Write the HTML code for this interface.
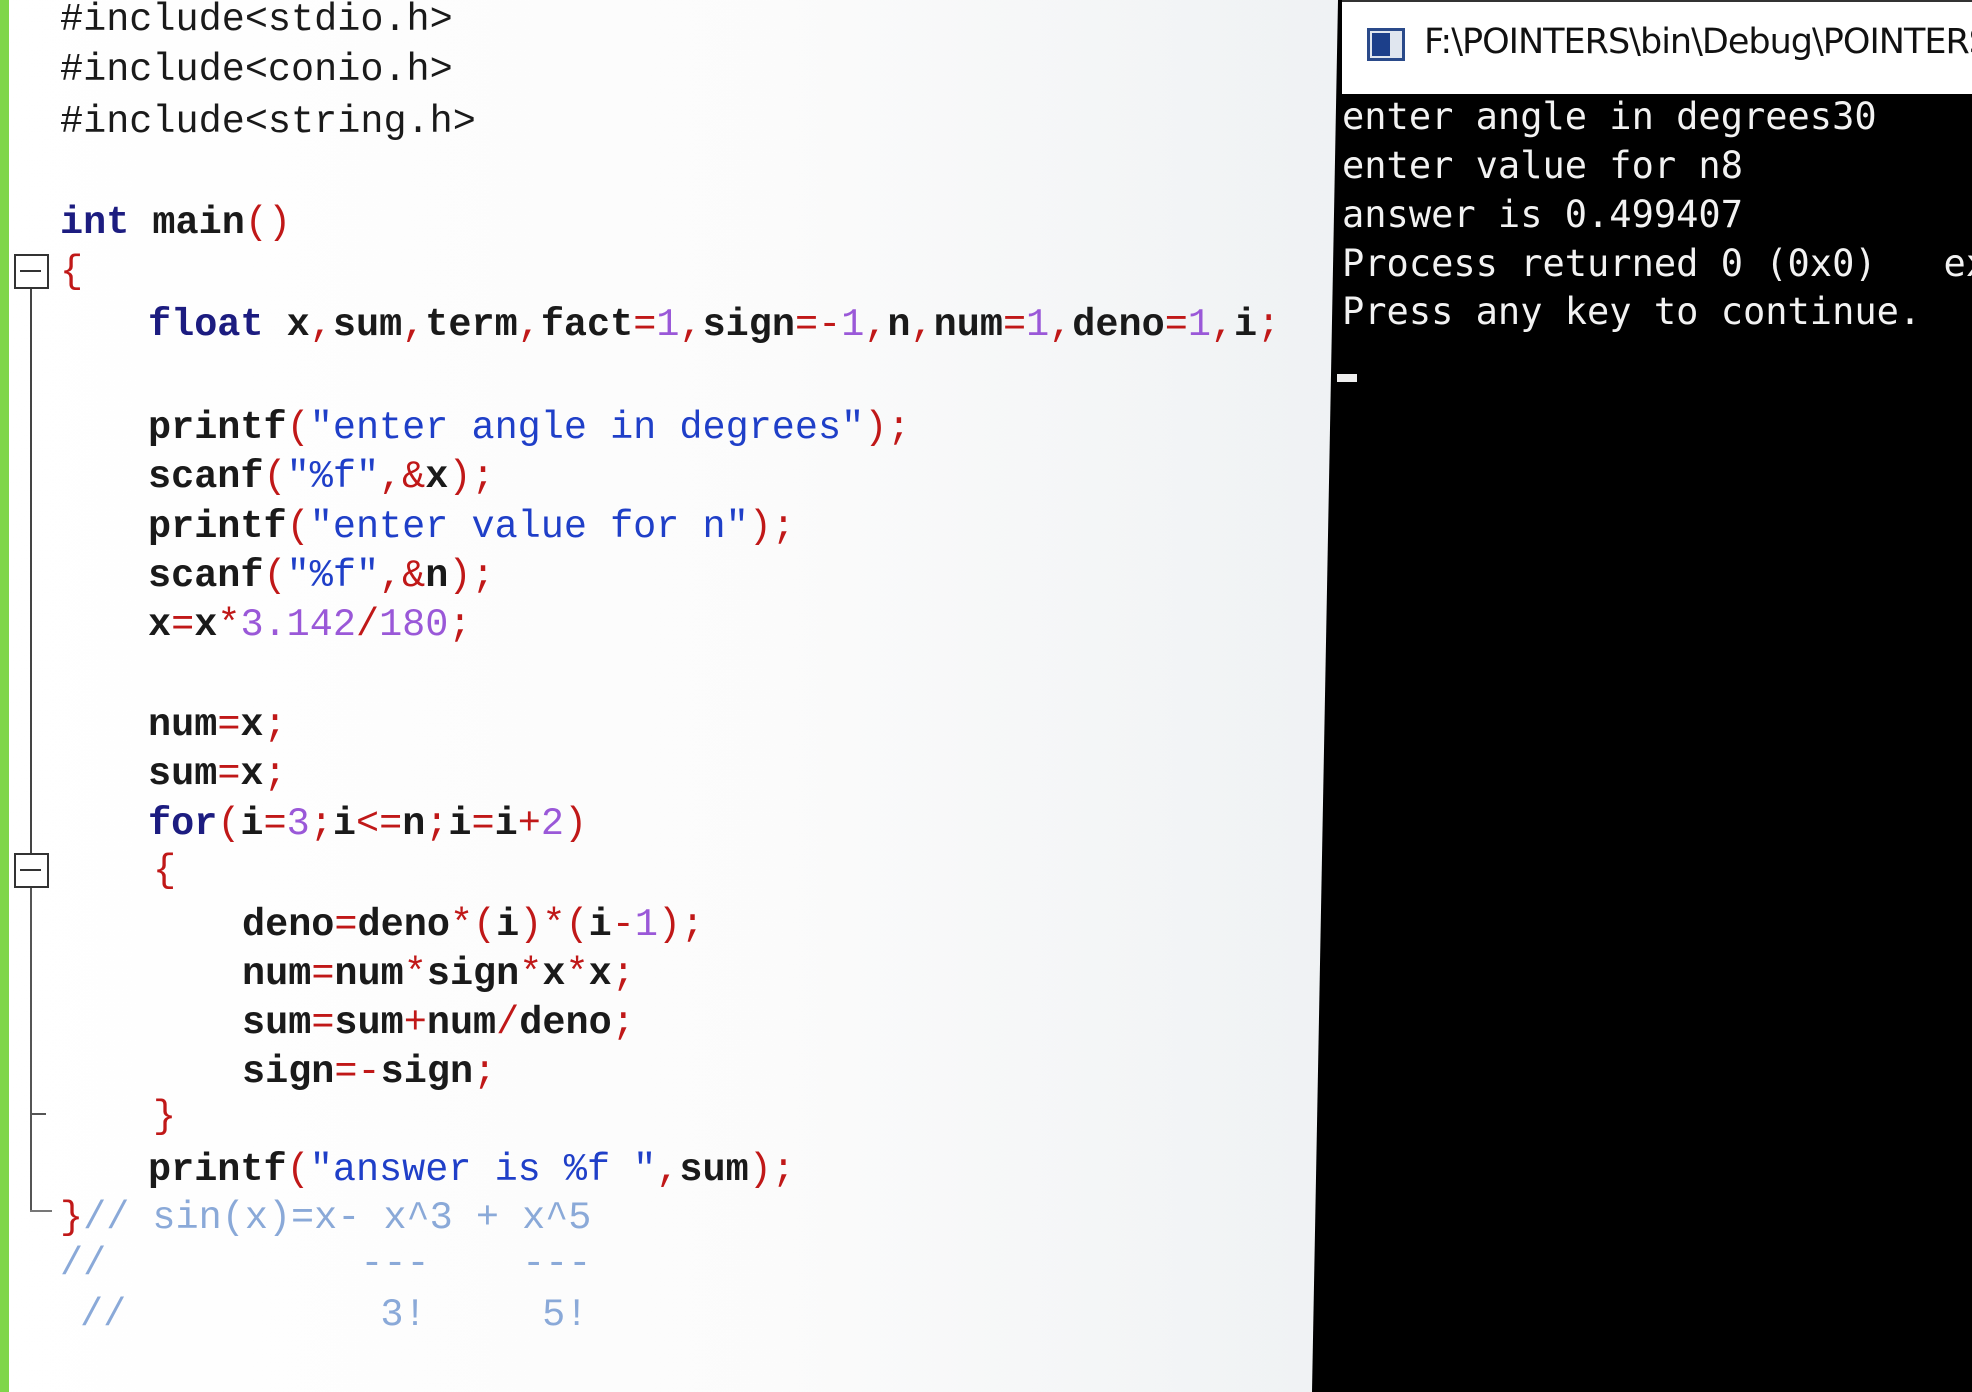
<!DOCTYPE html>
<html><head><style>
body{margin:0;width:1972px;height:1392px;overflow:hidden;position:relative;background:linear-gradient(90deg,#fff 0%,#fbfbfb 40%,#eef1f3 70%,#f4f6f6 100%);font-family:"Liberation Mono",monospace;}
.l{position:absolute;font-size:38.5px;line-height:50px;white-space:pre;color:#1a1a1a;}
.k{color:#1c1c80;font-weight:bold}
.t{color:#1a1a1a;font-weight:bold}
.s{color:#1f3fc8}
.p{color:#c01818}
.n{color:#9a58d8}
.c{color:#8aa9d8}
.con{position:absolute;left:1342px;font-size:37px;line-height:44px;color:#f2f2f2;white-space:pre;font-family:"DejaVu Sans Mono","Liberation Mono",monospace;}
</style></head><body>
<div style="position:absolute;left:0;top:0;width:9px;height:1392px;background:#7fd64a"></div>
<div style="position:absolute;left:14px;top:254px;width:31px;height:31px;border:2px solid #333;background:#fff"></div>
<div style="position:absolute;left:20px;top:270px;width:21px;height:2px;background:#333"></div>
<div style="position:absolute;left:30px;top:289px;width:2px;height:564px;background:#444"></div>
<div style="position:absolute;left:14px;top:853px;width:31px;height:31px;border:2px solid #333;background:#fff"></div>
<div style="position:absolute;left:20px;top:869px;width:21px;height:2px;background:#333"></div>
<div style="position:absolute;left:30px;top:888px;width:2px;height:322px;background:#555"></div>
<div style="position:absolute;left:30px;top:1113px;width:16px;height:2px;background:#555"></div>
<div style="position:absolute;left:30px;top:1210px;width:22px;height:2px;background:#777"></div>

<div class="l" style="left:60px;top:-5px">#include&lt;stdio.h&gt;</div>
<div class="l" style="left:60px;top:45px">#include&lt;conio.h&gt;</div>
<div class="l" style="left:60px;top:97px">#include&lt;string.h&gt;</div>
<div class="l" style="left:60px;top:198px"><span class="k">int</span> <span class="t">main</span><span class="p">()</span></div>
<div class="l" style="left:60px;top:247px"><span class="p">{</span></div>
<div class="l" style="left:148px;top:300px"><span class="k">float</span> <span class="t">x</span><span class="p">,</span><span class="t">sum</span><span class="p">,</span><span class="t">term</span><span class="p">,</span><span class="t">fact</span><span class="p">=</span><span class="n">1</span><span class="p">,</span><span class="t">sign</span><span class="p">=-</span><span class="n">1</span><span class="p">,</span><span class="t">n</span><span class="p">,</span><span class="t">num</span><span class="p">=</span><span class="n">1</span><span class="p">,</span><span class="t">deno</span><span class="p">=</span><span class="n">1</span><span class="p">,</span><span class="t">i</span><span class="p">;</span></div>
<div class="l" style="left:148px;top:403px"><span class="t">printf</span><span class="p">(</span><span class="s">"enter angle in degrees"</span><span class="p">);</span></div>
<div class="l" style="left:148px;top:452px"><span class="t">scanf</span><span class="p">(</span><span class="s">"%f"</span><span class="p">,&amp;</span><span class="t">x</span><span class="p">);</span></div>
<div class="l" style="left:148px;top:502px"><span class="t">printf</span><span class="p">(</span><span class="s">"enter value for n"</span><span class="p">);</span></div>
<div class="l" style="left:148px;top:551px"><span class="t">scanf</span><span class="p">(</span><span class="s">"%f"</span><span class="p">,&amp;</span><span class="t">n</span><span class="p">);</span></div>
<div class="l" style="left:148px;top:600px"><span class="t">x</span><span class="p">=</span><span class="t">x</span><span class="p">*</span><span class="n">3.142</span><span class="p">/</span><span class="n">180</span><span class="p">;</span></div>
<div class="l" style="left:148px;top:700px"><span class="t">num</span><span class="p">=</span><span class="t">x</span><span class="p">;</span></div>
<div class="l" style="left:148px;top:749px"><span class="t">sum</span><span class="p">=</span><span class="t">x</span><span class="p">;</span></div>
<div class="l" style="left:148px;top:799px"><span class="k">for</span><span class="p">(</span><span class="t">i</span><span class="p">=</span><span class="n">3</span><span class="p">;</span><span class="t">i</span><span class="p">&lt;=</span><span class="t">n</span><span class="p">;</span><span class="t">i</span><span class="p">=</span><span class="t">i</span><span class="p">+</span><span class="n">2</span><span class="p">)</span></div>
<div class="l" style="left:153px;top:846px"><span class="p">{</span></div>
<div class="l" style="left:242px;top:900px"><span class="t">deno</span><span class="p">=</span><span class="t">deno</span><span class="p">*(</span><span class="t">i</span><span class="p">)*(</span><span class="t">i</span><span class="p">-</span><span class="n">1</span><span class="p">);</span></div>
<div class="l" style="left:242px;top:949px"><span class="t">num</span><span class="p">=</span><span class="t">num</span><span class="p">*</span><span class="t">sign</span><span class="p">*</span><span class="t">x</span><span class="p">*</span><span class="t">x</span><span class="p">;</span></div>
<div class="l" style="left:242px;top:998px"><span class="t">sum</span><span class="p">=</span><span class="t">sum</span><span class="p">+</span><span class="t">num</span><span class="p">/</span><span class="t">deno</span><span class="p">;</span></div>
<div class="l" style="left:242px;top:1047px"><span class="t">sign</span><span class="p">=-</span><span class="t">sign</span><span class="p">;</span></div>
<div class="l" style="left:153px;top:1092px"><span class="p">}</span></div>
<div class="l" style="left:148px;top:1145px"><span class="t">printf</span><span class="p">(</span><span class="s">"answer is %f "</span><span class="p">,</span><span class="t">sum</span><span class="p">);</span></div>
<div class="l" style="left:60px;top:1193px"><span class="p">}</span><span class="c">// sin(x)=x- x^3 + x^5</span></div>
<div class="l c" style="left:60px;top:1239px">//           ---    ---</div>
<div class="l c" style="left:80px;top:1290px">//           3!     5!</div>

<div style="position:absolute;left:0;top:0;width:1972px;height:1392px;background:#000;clip-path:polygon(1338px 0,1972px 0,1972px 1392px,1312px 1392px)"></div>
<div style="position:absolute;left:1342px;top:0;width:630px;height:92px;background:#fff;border-top:2px solid #333"></div>
<div style="position:absolute;left:1367px;top:28px;width:38px;height:33px;border:3px solid #2a4a8a;background:#e0e6ef;box-sizing:border-box"></div>
<div style="position:absolute;left:1372px;top:33px;width:18px;height:23px;background:#1c3f8a"></div>
<div style="position:absolute;left:1424px;top:22px;font-family:'DejaVu Sans','Liberation Sans',sans-serif;font-size:35px;color:#111;white-space:nowrap;letter-spacing:-1px">F:\POINTERS\bin\Debug\POINTERS</div>
<div class="con" style="top:95px">enter angle in degrees30</div>
<div class="con" style="top:144px">enter value for n8</div>
<div class="con" style="top:193px">answer is 0.499407</div>
<div class="con" style="top:242px">Process returned 0 (0x0)   ex</div>
<div class="con" style="top:290px">Press any key to continue.</div>
<div style="position:absolute;left:1337px;top:374px;width:20px;height:8px;background:#eee"></div>
</body></html>
